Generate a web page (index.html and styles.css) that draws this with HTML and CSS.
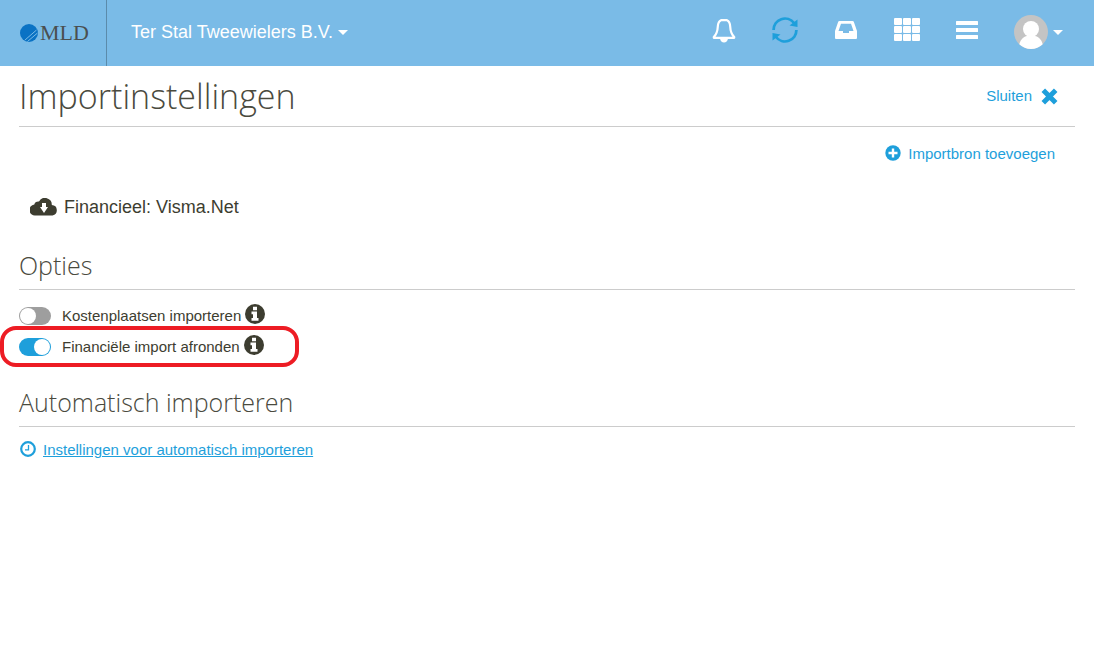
FILE: index.html
```html
<!DOCTYPE html>
<html lang="nl">
	<head>
		<meta charset="utf-8">
		<meta name="viewport" content="width=device-width, initial-scale=1">

		<title>Importinstellingen</title>

		<link rel="stylesheet" href="styles.css">
	</head>
	<body>
	<header class="topbar">
		<a href="#" class="logo">
			<svg width="20" height="18" viewBox="0 0 20 18" aria-hidden="true">
				<circle cx="9" cy="9" r="9" fill="#0a72c4"/>
				<path d="M5 16L16.500 6M7.500 17.500L17.500 9" stroke="#7abbe7" stroke-width="1"/>
			</svg>
			<span>MLD</span>
		</a>
		<button type="button" class="company">Ter Stal Tweewielers B.V. <span class="caret"></span></button>

		<nav class="tools">
			<button type="button" aria-label="Meldingen">
				<svg width="24" height="26" viewBox="0 0 24 26">
					<path d="M9 3.200h6c2.400 1 3 3.300 3.200 6.300.2 4.500.9 7.500 4 10.500v.8H1.800V20c3.100-3 3.800-6 4-10.500.2-3 .8-5.300 3.200-6.300z" fill="none" stroke="#fff" stroke-width="2.200" stroke-linejoin="round"/>
					<path d="M8 21.500h8c-.4 2.500-2 4-4 4s-3.600-1.500-4-4z" fill="#fff"/>
				</svg>
			</button>
			<button type="button" aria-label="Vernieuwen">
				<svg width="26" height="26" viewBox="0 0 26 26">
					<path d="M1.600 13A11.400 11.400 0 0 1 22 6M24.400 13A11.400 11.400 0 0 1 4 20" fill="none" stroke="#1e9fdb" stroke-width="2.800"/>
					<path d="M25.500 2.500V10l-8-1.500zM.5 23.500V16l8 1.500z" fill="#1e9fdb"/>
				</svg>
			</button>
			<button type="button" aria-label="Postvak">
				<svg width="24" height="26" viewBox="0 0 24 26">
					<path fill-rule="evenodd" d="M5.500 4h13q1 0 1.300.8L23 14v7q0 1-1 1H2q-1 0-1-1v-7L4.200 4.800Q4.500 4 5.500 4zm1.500 2.800L4.500 14H9v2h6v-2h4.500L17 6.800z" fill="#fff"/>
				</svg>
			</button>
			<button type="button" aria-label="Toepassingen">
				<svg width="26" height="26" viewBox="0 0 26 26" fill="#fff">
					<rect x="0" y="1" width="8" height="7" rx="1"/><rect x="9" y="1" width="8" height="7" rx="1"/><rect x="18" y="1" width="8" height="7" rx="1"/>
					<rect x="0" y="9" width="8" height="7" rx="1"/><rect x="9" y="9" width="8" height="7" rx="1"/><rect x="18" y="9" width="8" height="7" rx="1"/>
					<rect x="0" y="17" width="8" height="7" rx="1"/><rect x="9" y="17" width="8" height="7" rx="1"/><rect x="18" y="17" width="8" height="7" rx="1"/>
				</svg>
			</button>
			<button type="button" aria-label="Menu">
				<svg width="22" height="26" viewBox="0 0 22 26" fill="#fff">
					<rect y="4" width="22" height="4" rx=".5"/><rect y="11" width="22" height="4" rx=".5"/><rect y="18" width="22" height="4" rx=".5"/>
				</svg>
			</button>
			<button type="button" class="account" aria-label="Account">
				<svg width="34" height="34" viewBox="0 0 34 34">
					<circle cx="17" cy="17" r="17" fill="#c4c4c4"/>
					<circle cx="17" cy="14" r="8" fill="#fff"/>
					<path d="M5.300 29.300C7 23 11 20.500 17 20.500s10 2.500 11.700 8.800A17 17 0 0 1 5.300 29.300z" fill="#fff"/>
				</svg>
				<span class="caret"></span>
			</button>
		</nav>
	</header>

	<main class="page">
		<div class="page-title">
			<h1>Importinstellingen</h1>
			<a href="#" class="close">Sluiten
				<svg width="17" height="17" viewBox="0 0 17 17" aria-hidden="true">
					<path d="M2.300 2.300l12.400 12.400M14.700 2.300L2.300 14.700" stroke="#1e9fdb" stroke-width="5"/>
				</svg>
			</a>
		</div>

		<div class="actions">
			<a href="#">
				<svg width="16" height="18" viewBox="0 0 16 18" aria-hidden="true">
					<circle cx="8" cy="8" r="7.700" fill="#1e9fdb"/>
					<path d="M8 3.500v9M3.500 8h9" stroke="#fff" stroke-width="2.400"/>
				</svg>
				Importbron toevoegen
			</a>
		</div>

		<div class="source">
			<svg width="28" height="18" viewBox="0 0 28 18" aria-hidden="true">
				<path d="M5.500 17.500a5.500 5.500 0 0 1-1.200-11 3.900 3.900 0 0 1 4.700-3 6.800 6.800 0 0 1 12.800 3.500 5.300 5.300 0 0 1 .7 10.500z" fill="#3d3d30"/>
				<path d="M12 5h4v4h2l-4 6-4-6h2z" fill="#fff"/>
			</svg>
			Financieel: Visma.Net
		</div>

		<h2>Opties</h2>
		<div class="option">
			<input type="checkbox" class="switch" id="kostenplaatsen">
			<label for="kostenplaatsen">Kostenplaatsen importeren</label>
			<button type="button" class="info" aria-label="Uitleg">
				<svg width="20" height="20" viewBox="0 0 20 20">
					<circle cx="10" cy="10" r="10" fill="#3d3d30"/>
					<path d="M8 2.800h4v3.400H8zM6.500 7.500H12V14h1.500v2.700h-7V14H8v-3.800H6.500z" fill="#fff"/>
				</svg>
			</button>
		</div>
		<div class="option highlight">
			<input type="checkbox" class="switch" id="afronden" checked>
			<label for="afronden">Financiële import afronden</label>
			<button type="button" class="info" aria-label="Uitleg">
				<svg width="20" height="20" viewBox="0 0 20 20">
					<circle cx="10" cy="10" r="10" fill="#3d3d30"/>
					<path d="M8 2.800h4v3.400H8zM6.500 7.500H12V14h1.500v2.700h-7V14H8v-3.800H6.500z" fill="#fff"/>
				</svg>
			</button>
		</div>

		<h2>Automatisch importeren</h2>
		<div class="schedule">
			<svg width="17" height="18" viewBox="0 0 17 18" aria-hidden="true">
				<circle cx="9" cy="8" r="6.800" fill="none" stroke="#1e9fdb" stroke-width="2.200"/>
				<path d="M9.500 4v4.800H6" fill="none" stroke="#1e9fdb" stroke-width="1.300"/>
			</svg>
			<a href="#">Instellingen voor automatisch importeren</a>
		</div>
	</main>
	</body>
</html>
```
FILE: styles.css
```css
*,
*::before,
*::after {
	box-sizing: border-box;
}

body {
	margin: 0;
	background: #fff;
	color: #3d3d30;

	font-family: "Liberation Sans", Arial, sans-serif;
	font-size: 15px;
	line-height: 20px;
}

a {
	color: #1e9fdb;
	text-decoration: none;
}

button {
	padding: 0;
	border: 0;
	background: none;
	color: inherit;
	font: inherit;
	cursor: pointer;
}

svg {
	display: block;
	flex: none;
}

/* Top bar */
.topbar {
	display: flex;
	align-items: center;
	height: 66px;
	background: #7abbe7;
	color: #fff;
}

.logo {
	display: flex;
	align-items: center;
	align-self: stretch;
	width: 107px;
	padding-left: 20px;
	border-right: 1px solid #5b8bab;

	color: #4a4f50;
	font-family: "Liberation Serif", "Times New Roman", serif;
	font-size: 22px;
	line-height: 26px;
}

.company {
	display: flex;
	align-items: center;
	gap: 5px;
	margin-left: 24px;
	padding-bottom: 2px;
	font-size: 18px;
	line-height: 24px;
}

.caret {
	border: 5px solid transparent;
	border-top-color: #fff;
	border-bottom: 0;
}

.tools {
	display: flex;
	align-items: center;
	gap: 36px;
	margin-left: auto;
	padding: 0 31px 6px 0;
}

.account {
	display: flex;
	align-items: center;
	gap: 5px;
	padding-top: 4px;
}

/* Page */
.page {
	padding: 0 19px;
}

.page-title {
	display: flex;
	align-items: center;
	justify-content: space-between;
	height: 61px;
	border-bottom: 1px solid #ccc;
}

h1,
h2 {
	margin: 0;
	color: #4a4a3e;
	font-family: "Open Sans", sans-serif;
	font-weight: 300;
}

h1 {
	font-size: 34px;
	line-height: 48px;
}

h2 {
	padding-bottom: 6px;
	border-bottom: 1px solid #ccc;
	font-size: 25px;
	line-height: 36px;
}

.close {
	display: flex;
	align-items: center;
	gap: 9px;
	padding-right: 17px;
}

.actions {
	display: flex;
	justify-content: flex-end;
	padding: 17px 20px 0 0;
}

.actions a,
.schedule {
	display: flex;
	align-items: center;
	gap: 7px;
}

.source {
	display: flex;
	align-items: center;
	gap: 6px;
	margin: 31px 0 28px 11px;
	font-size: 18px;
	line-height: 24px;
}

.option {
	display: flex;
	align-items: center;
	position: relative;
	height: 31px;
}

h2 + .option {
	margin-top: 10px;
}

.option label {
	margin: 0 4px 0 11px;
}

.info {
	padding-bottom: 3px;
}

.switch {
	appearance: none;
	width: 32px;
	height: 18px;
	margin: 0;
	padding: 1px;
	border-radius: 9px;
	background: #9e9e9e;
	cursor: pointer;
}

.switch::before {
	content: "";
	display: block;
	width: 16px;
	height: 16px;
	border-radius: 50%;
	background: #fff;
}

.switch:checked {
	background: #1e9fdb;
}

.switch:checked::before {
	margin-left: auto;
}

.highlight {
	margin-bottom: 22px;
}

/* Marker around the option, drawn over the page */
.highlight::after {
	content: "";
	position: absolute;
	top: -5px;
	left: -19px;
	width: 299px;
	height: 41px;
	border: 4px solid #ed1c24;
	border-radius: 16px;
	pointer-events: none;
}

.schedule {
	margin-top: 13px;
}

.schedule a {
	text-decoration: underline;
}
```
